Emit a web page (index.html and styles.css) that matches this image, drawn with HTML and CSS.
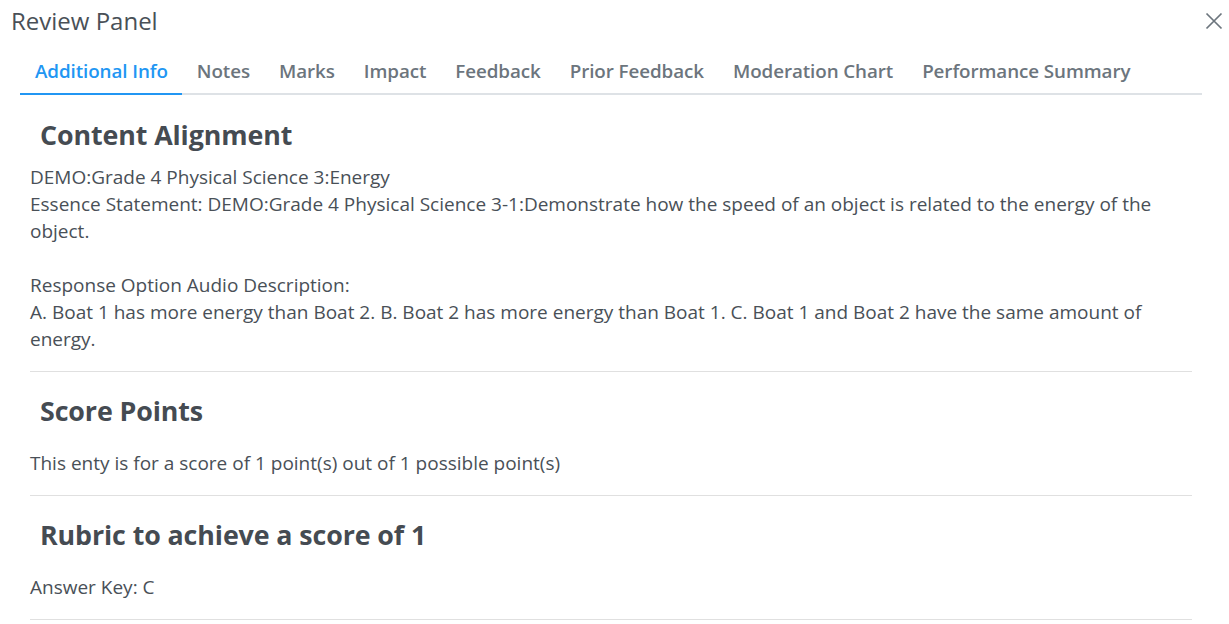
FILE: index.html
```html
<!DOCTYPE html>
<html>
<head>
<meta charset="utf-8">
<link rel="stylesheet" href="styles.css">
</head>
<body>
<div class="panel">
  <div class="panel-header">
    <h1 class="panel-title">Review Panel</h1>
    <button class="close-btn" aria-label="Close">
      <svg width="18" height="18" viewBox="0 0 18 18"><path d="M1.5 1.5 L16.5 16.5 M16.5 1.5 L1.5 16.5" stroke="#6c757d" stroke-width="1.7" fill="none"/></svg>
    </button>
  </div>
  <div class="tabs-wrap">
    <ul class="tabs">
      <li class="tab active">Additional Info</li>
      <li class="tab">Notes</li>
      <li class="tab">Marks</li>
      <li class="tab">Impact</li>
      <li class="tab">Feedback</li>
      <li class="tab">Prior Feedback</li>
      <li class="tab">Moderation Chart</li>
      <li class="tab">Performance Summary</li>
    </ul>
    <div class="content">
      <section class="section">
        <h2 class="section-title first">Content Alignment</h2>
        <p class="text">DEMO:Grade 4 Physical Science 3:Energy<br>Essence Statement: DEMO:Grade 4 Physical Science 3-1:Demonstrate how the speed of an object is related to the energy of the object.<br><br>Response Option Audio Description:<br>A. Boat 1 has more energy than Boat 2. B. Boat 2 has more energy than Boat 1. C. Boat 1 and Boat 2 have the same amount of energy.</p>
      </section>
      <section class="section">
        <h2 class="section-title">Score Points</h2>
        <p class="text">This enty is for a score of 1 point(s) out of 1 possible point(s)</p>
      </section>
      <section class="section">
        <h2 class="section-title">Rubric to achieve a score of 1</h2>
        <p class="text">Answer Key: C</p>
      </section>
    </div>
  </div>
</div>
</body>
</html>
```

FILE: styles.css
```css
html, body {
  margin: 0;
  padding: 0;
  background: #fff;
}
body {
  font-family: "Open Sans", "Noto Sans", sans-serif;
  color: #495057;
}
.panel {
  width: 1229px;
}
.panel-header {
  display: flex;
  justify-content: space-between;
  align-items: flex-start;
  padding: 5px 6px 0 11px;
}
.panel-title {
  margin: 0;
  font-size: 24px;
  font-weight: 400;
  line-height: 32px;
  color: #495057;
}
.close-btn {
  border: 0;
  background: none;
  padding: 0;
  margin: 7px 0 0 0;
  width: 18px;
  height: 18px;
  cursor: pointer;
}
.close-btn svg { display: block; }
.tabs-wrap {
  margin: 0 27px 0 20px;
}
.tabs {
  list-style: none;
  margin: 21px 0 0 0;
  padding: 0;
  display: flex;
  border-bottom: 2px solid #dee2e6;
}
.tab {
  padding: 0 14px 9px 15px;
  margin-bottom: -2px;
  font-size: 18.8px;
  font-weight: 600;
  line-height: 26px;
  letter-spacing: -0.08px;
  color: #6c757d;
  border-bottom: 2px solid transparent;
  white-space: nowrap;
}
.tab.active {
  color: #2196f3;
  border-bottom-color: #2196f3;
}
.content {
  padding: 0 10px;
}
.section {
  border-bottom: 1px solid #e0e0e0;
}
.section-title {
  margin: 0;
  padding: 21px 10px 21px;
  font-size: 26.8px;
  font-weight: 700;
  color: #454b52;
  line-height: 36px;
  letter-spacing: -0.1px;
}
.section-title.first {
  padding-top: 22px;
  padding-bottom: 11px;
}
.text {
  margin: 0;
  font-size: 19px;
  line-height: 27px;
  color: #495057;
  padding-bottom: 18px;
}
```
